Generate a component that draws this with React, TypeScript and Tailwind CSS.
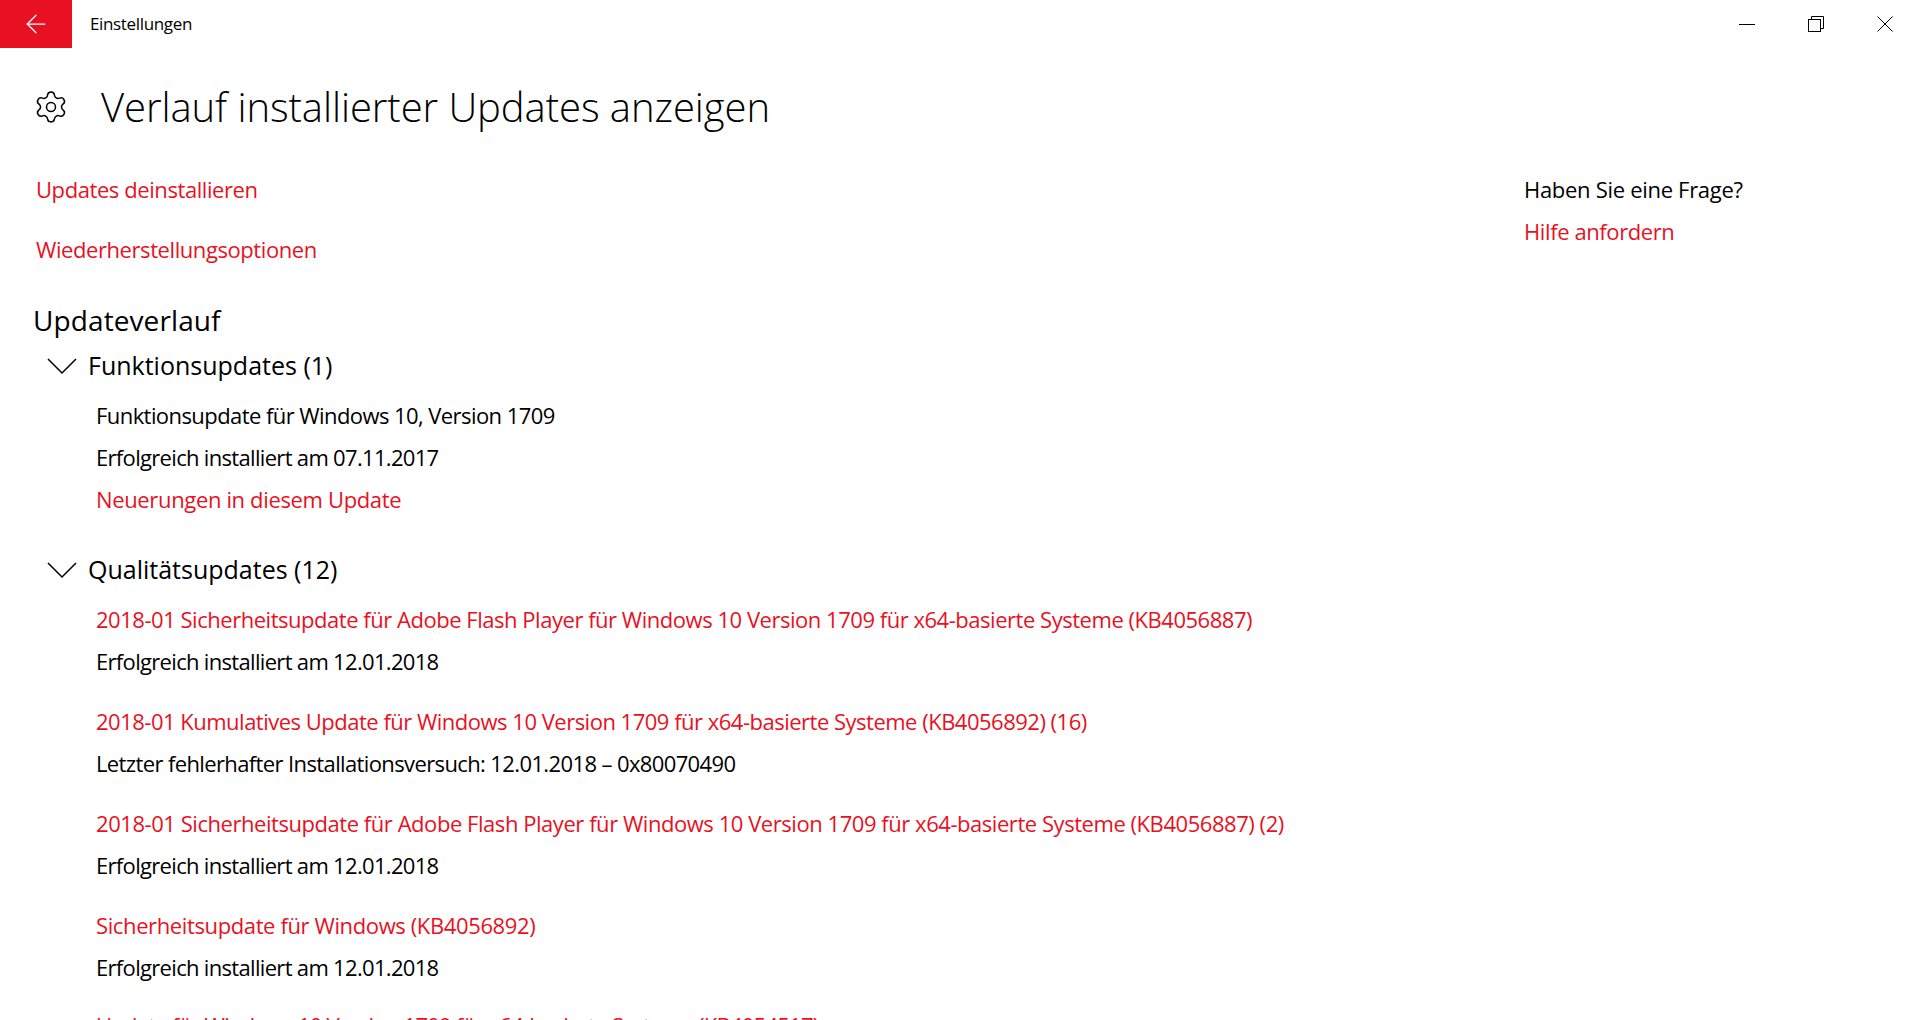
import { ArrowLeft, Settings } from "lucide-react";

function UpdateEntry({ title, status, titleClass, statusClass }: { title: string; status: string; titleClass: string; statusClass: string }) {
  return (
    <div className="mb-[18px]">
      <div className={`flex h-[42px] items-center text-[#e81123] ${titleClass}`}>{title}</div>
      <div className={`flex h-[42px] items-center text-black ${statusClass}`}>{status}</div>
    </div>
  );
}

function GroupHeader({ label }: { label: string }) {
  return (
    <div className="flex h-[44px] items-center">
      <svg className="ml-[47px] h-[18px] w-[30px]" viewBox="0 0 30 18" fill="none" stroke="black" strokeWidth="1.5">
        <path d="M1 2l14 14L29 2" />
      </svg>
      <span className="ml-[11px] text-[25px] tracking-[0px]">{label}</span>
    </div>
  );
}

export default function App() {
  return (
    <div className="h-[1020px] w-[1920px] overflow-hidden bg-white font-['Open_Sans','Noto_Sans',sans-serif] text-[22px] font-normal tracking-[-0.35px] text-black">
      <div className="flex h-[48px] items-center">
        <div className="flex h-[48px] w-[72px] items-center justify-center bg-[#e81123]">
          <ArrowLeft className="h-[30px] w-[30px] text-white" strokeWidth={1} />
        </div>
        <span className="ml-[18px] text-[17px]">Einstellungen</span>
        <div className="ml-auto flex items-center pr-[27px]">
          <svg className="h-[16px] w-[16px]" viewBox="0 0 16 16" fill="none" stroke="black" strokeWidth="1">
            <path d="M0 8.5h16" />
          </svg>
          <svg className="ml-[53px] h-[16px] w-[16px]" viewBox="0 0 16 16" fill="none" stroke="black" strokeWidth="1">
            <rect x="0.5" y="3.5" width="12" height="12" />
            <path d="M3.5 3.5v-3h12v12h-3" />
          </svg>
          <svg className="ml-[53px] h-[16px] w-[16px]" viewBox="0 0 16 16" fill="none" stroke="black" strokeWidth="1">
            <path d="M0.5 0.5l15 15M15.5 0.5l-15 15" />
          </svg>
        </div>
      </div>

      <div className="flex h-[118px] items-center pl-[33px]">
        <Settings className="h-[36px] w-[36px]" strokeWidth={1} />
        <h1 className="ml-[32px] text-[40px] font-light tracking-[-0.06px]">Verlauf installierter Updates anzeigen</h1>
      </div>

      <div className="flex">
        <div className="w-[1524px]">
          <div className="pl-[36px] pt-[2px] tracking-[-0.42px] text-[#e81123]">
            <div className="flex h-[42px] items-center">Updates deinstallieren</div>
            <div className="mt-[18px] flex h-[42px] items-center">Wiederherstellungsoptionen</div>
          </div>

          <h2 className="mt-[28px] pl-[33px] text-[28px] leading-[44px] tracking-[0.1px]">Updateverlauf</h2>

          <div className="pt-[2px]">
            <GroupHeader label="Funktionsupdates (1)" />
          </div>
          <div className="mb-[28px] pl-[96px] pt-[6px]">
            <div className="flex h-[42px] items-center tracking-[-0.57px]">Funktionsupdate für Windows 10, Version 1709</div>
            <div className="flex h-[42px] items-center tracking-[-0.68px]">Erfolgreich installiert am 07.11.2017</div>
            <div className="flex h-[42px] items-center text-[#e81123]">Neuerungen in diesem Update</div>
          </div>

          <GroupHeader label="Qualitätsupdates (12)" />
          <div className="whitespace-nowrap pl-[96px] pt-[6px]">
            <UpdateEntry
              title="2018-01 Sicherheitsupdate für Adobe Flash Player für Windows 10 Version 1709 für x64-basierte Systeme (KB4056887)"
              status="Erfolgreich installiert am 12.01.2018"
              titleClass="tracking-[-0.47px]"
              statusClass="tracking-[-0.68px]"
            />
            <UpdateEntry
              title="2018-01 Kumulatives Update für Windows 10 Version 1709 für x64-basierte Systeme (KB4056892) (16)"
              status="Letzter fehlerhafter Installationsversuch: 12.01.2018 – 0x80070490"
              titleClass="tracking-[-0.5px]"
              statusClass="tracking-[-0.62px]"
            />
            <UpdateEntry
              title="2018-01 Sicherheitsupdate für Adobe Flash Player für Windows 10 Version 1709 für x64-basierte Systeme (KB4056887) (2)"
              status="Erfolgreich installiert am 12.01.2018"
              titleClass="tracking-[-0.45px]"
              statusClass="tracking-[-0.68px]"
            />
            <UpdateEntry
              title="Sicherheitsupdate für Windows (KB4056892)"
              status="Erfolgreich installiert am 12.01.2018"
              titleClass="tracking-[-0.38px]"
              statusClass="tracking-[-0.68px]"
            />
            <UpdateEntry
              title="Update für Windows 10 Version 1709 für x64-basierte Systeme (KB4054517)"
              status="Erfolgreich installiert am 12.01.2018"
              titleClass="-mt-[2px] tracking-[-0.74px]"
              statusClass="tracking-[-0.68px]"
            />
          </div>
        </div>

        <div className="pt-[2px]">
          <div className="flex h-[42px] items-center tracking-[-0.3px]">Haben Sie eine Frage?</div>
          <div className="flex h-[42px] items-center tracking-[-0.4px] text-[#e81123]">Hilfe anfordern</div>
        </div>
      </div>
    </div>
  );
}
